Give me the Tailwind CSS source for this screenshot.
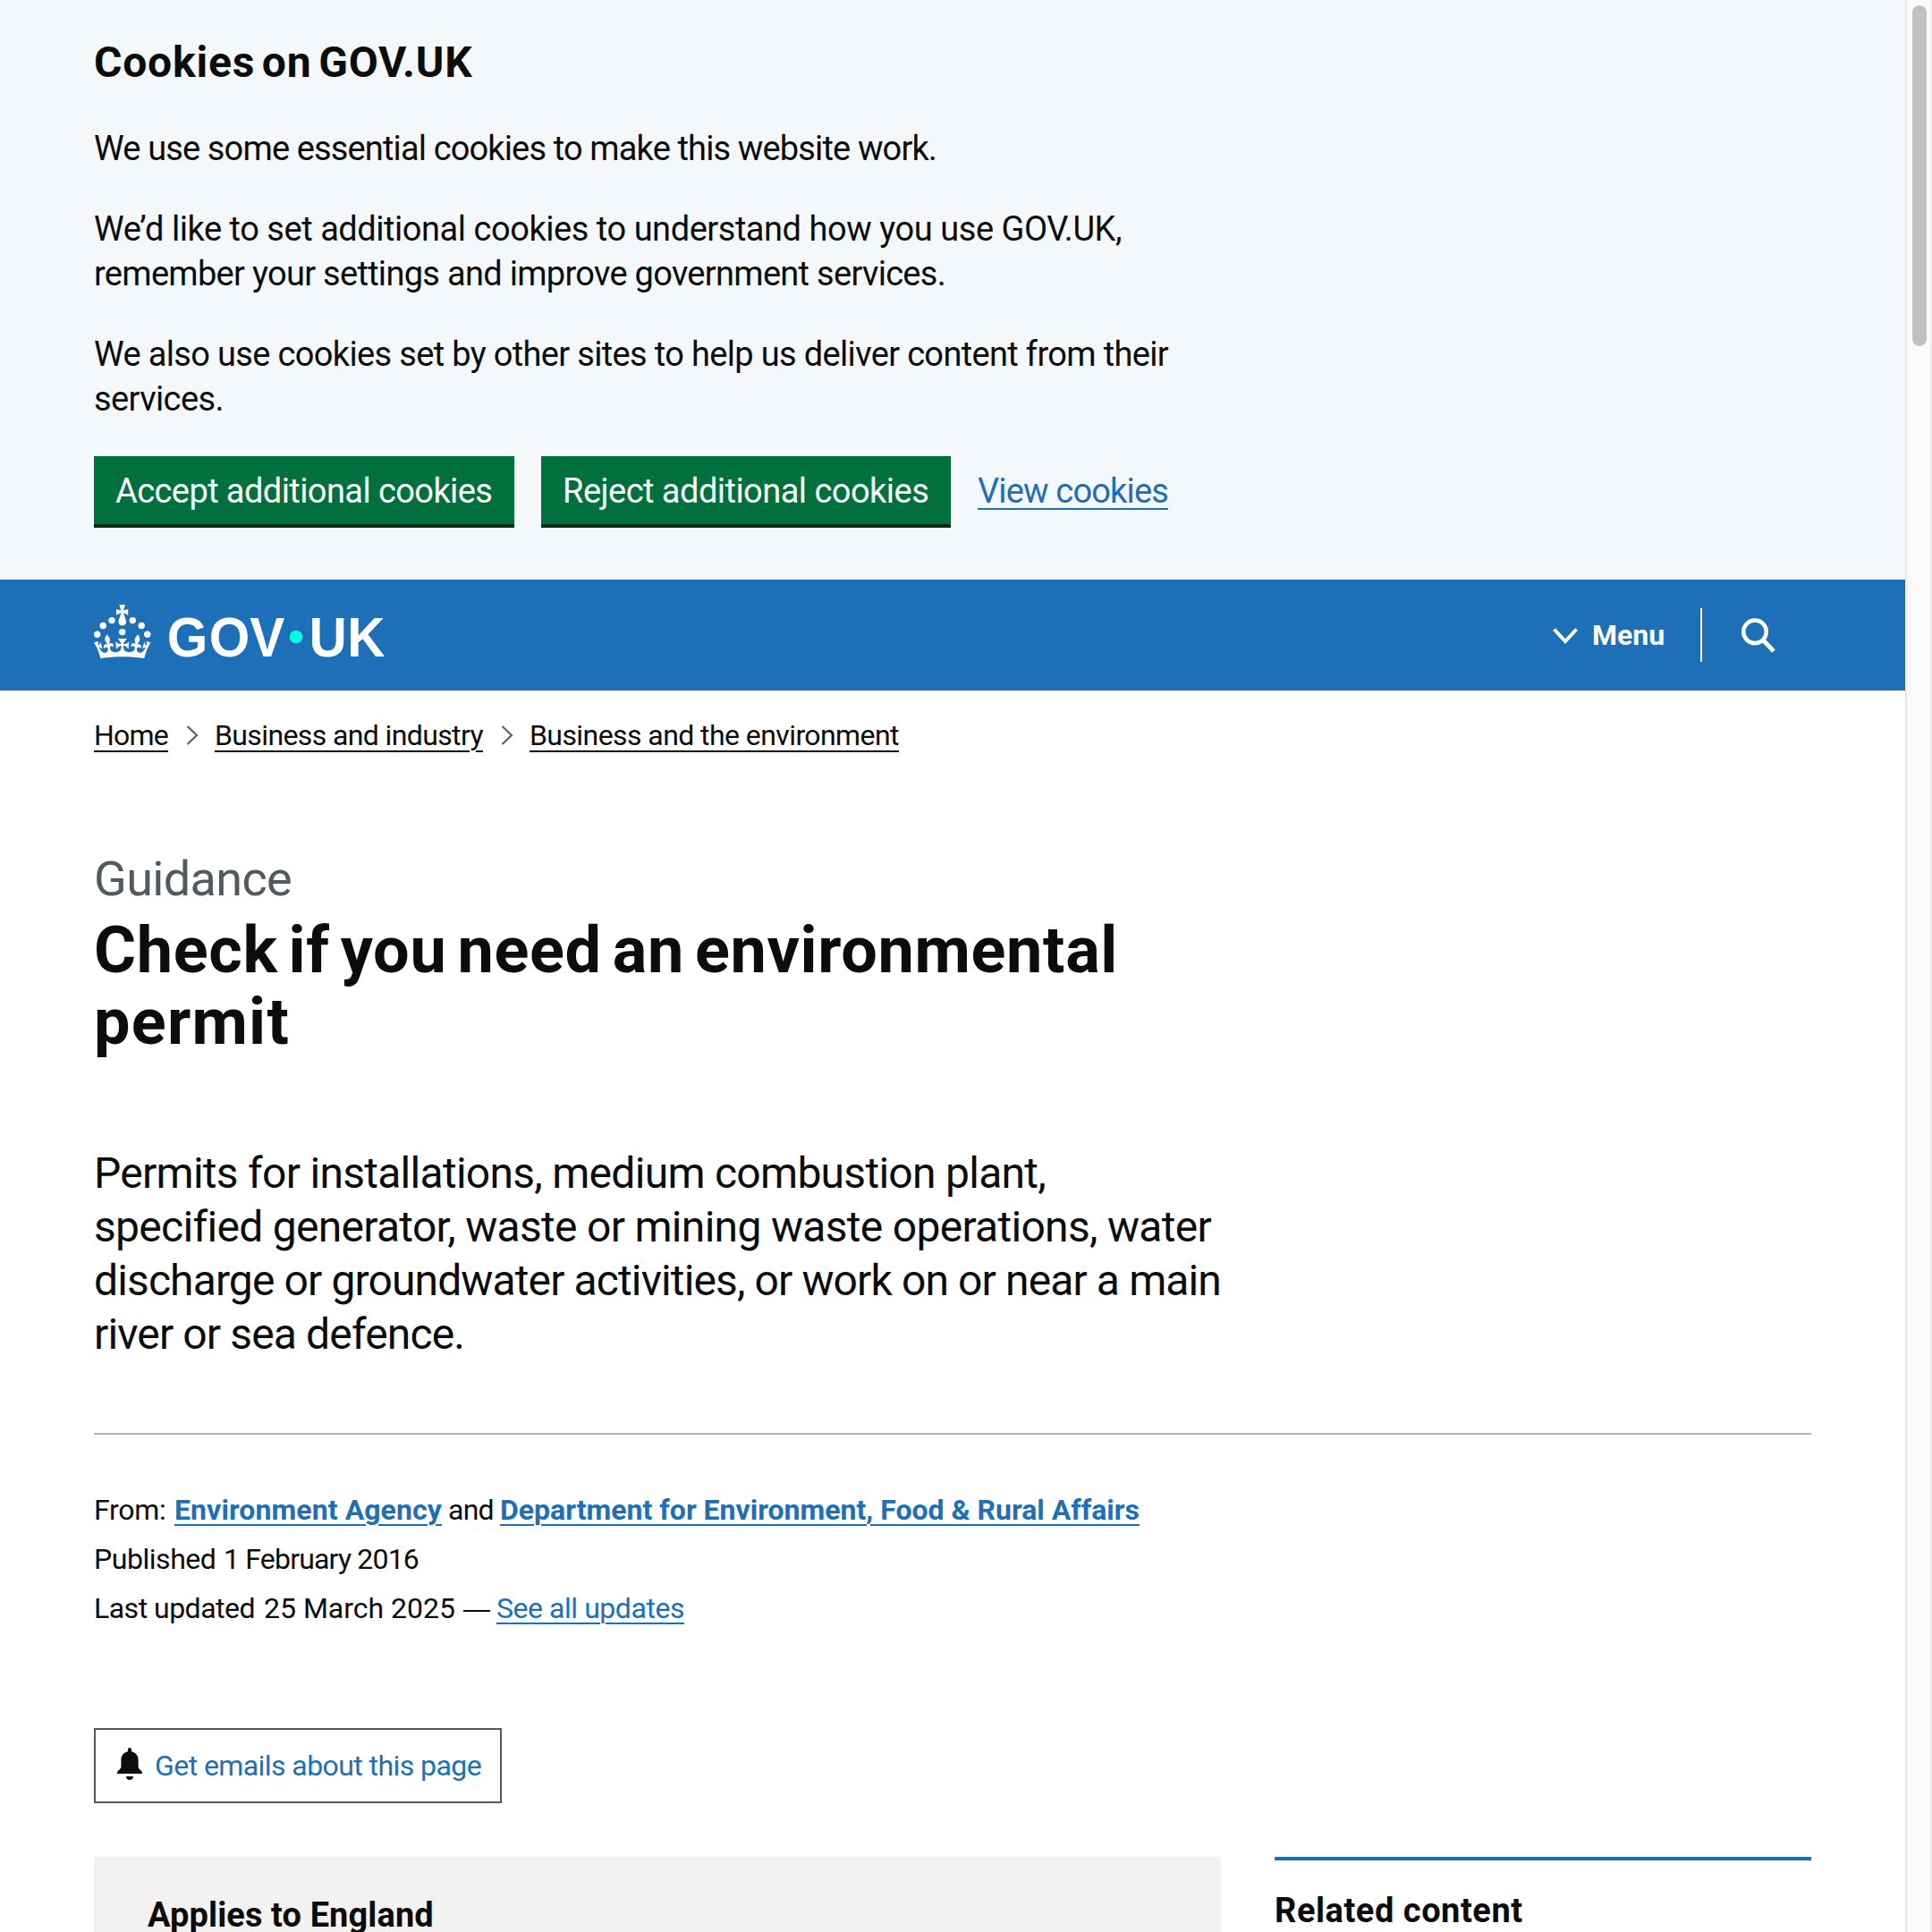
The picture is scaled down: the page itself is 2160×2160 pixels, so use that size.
<!DOCTYPE html>
<html lang="en">
<head>
<meta charset="utf-8">
<title>Check if you need an environmental permit - GOV.UK</title>
<script src="https://cdn.jsdelivr.net/npm/@tailwindcss/browser@4"></script>
</head>
<body class="bg-white">
<div class="flex w-[2160px] h-[2160px] overflow-hidden font-['Roboto',sans-serif] text-[#0b0c0c] whitespace-nowrap">
  <div class="w-[2130px] h-full overflow-hidden">
    <section class="bg-[#f4f8fb] h-[648px] px-[105px] pt-10">
      <h2 class="text-[48px] leading-[60px] font-bold tracking-[0.8px] [word-spacing:-5px]">Cookies on GOV.UK</h2>
      <div class="mt-[41px] flex flex-col gap-10 text-[38px] leading-[50px]">
        <p class="tracking-[-0.858px]">We use some essential cookies to make this website work.</p>
        <p><span class="tracking-[-0.456px]">We’d like to set additional cookies to understand how you use GOV.UK,</span><br><span class="tracking-[-0.703px]">remember your settings and improve government services.</span></p>
        <p><span class="tracking-[-0.66px]">We also use cookies set by other sites to help us deliver content from their</span><br><span class="tracking-[-0.6px]">services.</span></p>
      </div>
      <div class="mt-[39px] flex items-start gap-[30px] text-[38px] leading-[76px]">
        <button class="h-20 w-[470px] bg-[#00703c] border-b-4 border-[#002d18] text-white px-6 pt-px text-left tracking-[-0.58px]">Accept additional cookies</button>
        <button class="h-20 w-[458px] bg-[#00703c] border-b-4 border-[#002d18] text-white px-6 pt-px text-left tracking-[-0.53px]">Reject additional cookies</button>
        <a class="pt-px text-[#1d70b8] underline decoration-2 underline-offset-[6px] tracking-[-0.84px]">View cookies</a>
      </div>
    </section>

    <header class="bg-[#1d70b8] h-[124px] pl-[105px] flex items-center justify-between text-white">
      <svg class="w-[324px] h-[60px] mt-[-8px] overflow-visible" viewBox="0 0 324 60" fill="currentColor">
        <circle cx="20" cy="17.6" r="3.7"/><circle cx="10.2" cy="23.5" r="3.7"/><circle cx="3.7" cy="33.2" r="3.7"/><circle cx="31.7" cy="30.6" r="3.7"/><circle cx="43.3" cy="17.6" r="3.7"/><circle cx="53.2" cy="23.5" r="3.7"/><circle cx="59.7" cy="33.2" r="3.7"/>
        <path d="M33.1,9.8c.2-.1.3-.3.5-.5l4.6,2.4v-6.8l-4.6,1.5c-.1-.2-.3-.3-.5-.5l1.9-5.9h-6.7l1.9,5.9c-.2.1-.3.3-.5.5l-4.6-1.5v6.8l4.6-2.4c.1.2.3.3.5.5l-2.6,8c-.9,2.8,1.2,5.7,4.1,5.7h0c3,0,5.1-2.9,4.1-5.7l-2.6-8ZM37,37.9s-3.4,3.8-4.1,6.1c2.2,0,4.2-.5,6.4-2.8l-.7,8.5c-2-2.8-4.4-4.1-5.7-3.8.1,3.1.5,6.7,5.8,7.2,3.7.3,6.7-1.5,7-3.8.4-2.6-2-4.3-3.7-1.6-1.4-4.5,2.4-6.1,4.9-3.2-1.9-4.5-1.8-7.7,2.4-10.9,3,4,2.6,7.3-1.2,11.1,2.4-1.3,6.2,0,4,4.6-1.2-2.8-3.7-2.2-4.2.2-.3,1.7.7,3.7,3,4.2,1.9.3,4.7-.9,7-5.9-1.3,0-2.4.7-3.9,1.7l2.4-8c.6,2.3,1.4,3.7,2.2,4.5.6-1.6.5-2.8,0-5.3l5,1.8c-2.6,3.6-5.2,8.7-7.3,17.5-7.4-1.1-15.7-1.7-24.5-1.7h0c-8.8,0-17.1.6-24.5,1.7-2.1-8.9-4.7-13.9-7.3-17.5l5-1.8c-.5,2.5-.6,3.7,0,5.3.8-.8,1.6-2.3,2.2-4.5l2.4,8c-1.5-1-2.6-1.7-3.9-1.7,2.3,5,5.2,6.2,7,5.9,2.3-.4,3.3-2.4,3-4.2-.5-2.4-3-3.1-4.2-.2-2.2-4.6,1.6-6,4-4.6-3.7-3.7-4.2-7.1-1.2-11.1,4.2,3.2,4.3,6.4,2.4,10.9,2.5-2.8,6.3-1.3,4.9,3.2-1.8-2.7-4.1-1-3.7,1.6.3,2.3,3.3,4.1,7,3.8,5.4-.5,5.7-4.2,5.8-7.2-1.3-.2-3.7,1-5.7,3.8l-.7-8.5c2.2,2.3,4.2,2.7,6.4,2.8-.7-2.3-4.1-6.1-4.1-6.1h10.6,0Z"/>
        <text class="font-['Liberation_Sans'] font-bold text-[63px]" transform="scale(.93 1)" x="87.800 138.500 187.500 258.500 304.500" y="58">GOVUK</text>
        <circle cx="226" cy="36" r="7.3" fill="#00ffe0"/>
      </svg>
      <div class="flex items-center pr-[144px]">
        <svg class="w-[30px] h-[20px] mr-[15px] mt-[2px] shrink-0" viewBox="0 0 30 20" fill="none" stroke="currentColor" stroke-width="4"><path d="M2.5 2.5 15 16l12.500-13.500"/></svg>
        <span class="text-[32px] font-bold w-[82px]">Menu</span>
        <span class="w-[2px] h-[60px] bg-white ml-[39px] mr-[43px]"></span>
        <svg class="w-[40px] h-[40px] mt-[2px] shrink-0" viewBox="0 0 40 40" fill="none" stroke="currentColor"><circle cx="16" cy="15.300" r="12.800" stroke-width="4.500"/><path d="M25 24.500 37 37" stroke-width="4.800"/></svg>
      </div>
    </header>

    <main class="px-[105px] pt-[30px]">
      <nav class="flex items-center h-10 text-[32px] leading-[40px] underline decoration-2 underline-offset-[6px]">
        <a class="w-[83px] tracking-[-0.777px]">Home</a>
        <svg class="w-[14px] h-[22px] ml-5 mr-[18px] shrink-0" viewBox="0 0 14 22" fill="none" stroke="#505a5f" stroke-width="2"><path d="M1.500 1 12 11 1.500 21"/></svg>
        <a class="w-[300px] tracking-[-0.616px]">Business and industry</a>
        <svg class="w-[14px] h-[22px] ml-5 mr-[18px] shrink-0" viewBox="0 0 14 22" fill="none" stroke="#505a5f" stroke-width="2"><path d="M1.500 1 12 11 1.500 21"/></svg>
        <a class="w-[413px] tracking-[-0.575px]">Business and the environment</a>
      </nav>

      <p class="mt-[111px] text-[54px] leading-[60px] text-[#505a5f] tracking-[-0.65px]">Guidance</p>
      <h1 class="mt-[10px] text-[72px] leading-[80px] font-bold"><span class="tracking-[0.65px] [word-spacing:-6.5px]">Check if you need an environmental</span><br><span class="tracking-[1.25px]">permit</span></h1>
      <p class="mt-[99px] text-[48px] leading-[60px]"><span class="tracking-[-0.72px]">Permits for installations, medium combustion plant,</span><br><span class="tracking-[-0.7px]">specified generator, waste or mining waste operations, water</span><br><span class="tracking-[-0.879px]">discharge or groundwater activities, or work on or near a main</span><br><span class="tracking-[-0.86px]">river or sea defence.</span></p>

      <div class="mt-20 h-[2px] bg-[#b1b4b6]"></div>

      <dl class="mt-[57px] text-[32px] leading-[55px]">
        <div class="flex"><dt class="w-[90px] tracking-[-0.3px]">From:</dt><dd><a class="font-bold text-[#1d70b8] underline decoration-2 underline-offset-[5px] tracking-[0.091px]">Environment Agency</a><span class="tracking-[-0.8px]"> and </span><a class="font-bold text-[#1d70b8] underline decoration-2 underline-offset-[5px] tracking-[0.01px]">Department for Environment, Food &amp; Rural Affairs</a></dd></div>
        <div class="flex"><dt class="w-[145px] tracking-[-0.45px]">Published</dt><dd class="tracking-[-0.817px]">1 February 2016</dd></div>
        <div class="flex"><dt class="w-[190px] tracking-[-0.509px]">Last updated</dt><dd class="flex"><span class="w-[223px]">25 March 2025</span><span class="w-[37px] text-[30px] font-['Liberation_Sans']">—</span><a class="text-[#1d70b8] underline decoration-2 underline-offset-[5px] tracking-[-0.453px]">See all updates</a></dd></div>
      </dl>

      <a class="mt-[106px] flex items-center w-[456px] h-[84px] border-2 border-[#505a5f] pl-6 text-[32px] text-[#1d70b8]">
        <svg class="w-7 h-9 mr-[14px] mt-[-4px] shrink-0" viewBox="0 0 28 36" fill="#0b0c0c"><path d="M14 0c1.200 0 2 .8 2 2v2.200c4.600.9 7.600 4.500 7.600 9.300V21c0 1.700 1.400 3.300 3 4.600.9.800 1.400 1.600 1.400 3.400H0c0-1.800.5-2.600 1.400-3.400 1.600-1.300 3-2.900 3-4.600v-7.500c0-4.800 3-8.400 7.600-9.300V2c0-1.200.8-2 2-2z"/><path d="M10 32h8c0 2.500-1.700 4-4 4s-4-1.500-4-4z"/></svg>
        <span class="tracking-[-0.57px]">Get emails about this page</span>
      </a>

      <div class="mt-[60px] flex gap-[60px] text-[38px] leading-[50px] font-bold">
        <section class="w-[1260px] h-[200px] bg-[#f3f2f1] pt-10 pl-[60px] tracking-[0.1px]"><h2>Applies to England</h2></section>
        <aside class="w-[600px] border-t-4 border-[#1d70b8] pt-[31px] tracking-[0.54px]"><h2>Related content</h2></aside>
      </div>
    </main>
  </div>

  <div class="w-[30px] h-full bg-[#fafafa] border-l-2 border-l-[#e8e8e8] border-r-2 border-r-[#ededed] pt-[6px] pl-[6px]">
    <div class="w-4 h-[381px] rounded-full bg-[#c1c1c1]"></div>
  </div>
</div>
</body>
</html>
